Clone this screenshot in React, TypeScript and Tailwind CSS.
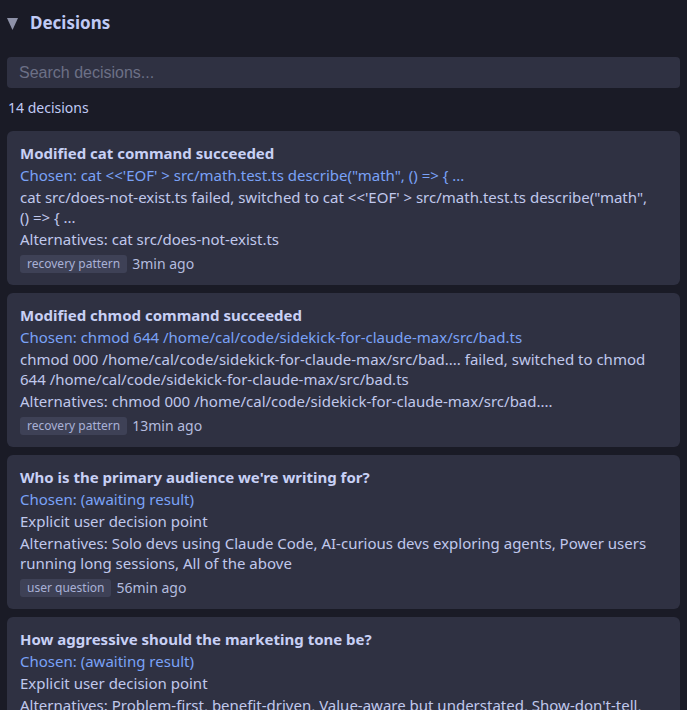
import { useState } from 'react'

type Decision = {
  id: number
  title: string
  chosen: string
  reason: string
  alternatives: string
  tag: string
  ago: string
}

const decisions: Decision[] = [
  {
    id: 1,
    title: 'Modified cat command succeeded',
    chosen: 'cat <<\'EOF\' > src/math.test.ts describe("math", () => { ...',
    reason: 'cat src/does-not-exist.ts failed, switched to cat <<\'EOF\' > src/math.test.ts describe("math", () => { ...',
    alternatives: 'cat src/does-not-exist.ts',
    tag: 'recovery pattern',
    ago: '3min ago',
  },
  {
    id: 2,
    title: 'Modified chmod command succeeded',
    chosen: 'chmod 644 /home/cal/code/sidekick-for-claude-max/src/bad.ts',
    reason: 'chmod 000 /home/cal/code/sidekick-for-claude-max/src/bad.... failed, switched to chmod 644 /home/cal/code/sidekick-for-claude-max/src/bad.ts',
    alternatives: 'chmod 000 /home/cal/code/sidekick-for-claude-max/src/bad....',
    tag: 'recovery pattern',
    ago: '13min ago',
  },
  {
    id: 3,
    title: "Who is the primary audience we're writing for?",
    chosen: '(awaiting result)',
    reason: 'Explicit user decision point',
    alternatives: 'Solo devs using Claude Code, AI-curious devs exploring agents, Power users running long sessions, All of the above',
    tag: 'user question',
    ago: '56min ago',
  },
  {
    id: 4,
    title: 'How aggressive should the marketing tone be?',
    chosen: '(awaiting result)',
    reason: 'Explicit user decision point',
    alternatives: "Problem-first, benefit-driven, Value-aware but understated, Show-don't-tell, Bold and opinionated",
    tag: 'user question',
    ago: '58min ago',
  },
  {
    id: 5,
    title: 'Which install method should the README lead with?',
    chosen: '(awaiting result)',
    reason: 'Explicit user decision point',
    alternatives: 'npm global install, npx one-liner, Clone and build',
    tag: 'user question',
    ago: '1h ago',
  },
]

function DecisionCard({ d }: { d: Decision }) {
  return (
    <div className="bg-[#2f3142] rounded-[6px] pl-[13px] pr-[25px] pt-3 pb-[11px] flex flex-col gap-[2px] text-[15px] leading-[20px]">
      <div className="font-bold text-[#c8d0f5]">{d.title}</div>
      <div className="text-[#7aa2f7]">Chosen: {d.chosen}</div>
      <div className="text-[#c0c8ec]">{d.reason}</div>
      <div className="text-[#c0c8ec]">Alternatives: {d.alternatives}</div>
      <div className="flex items-center gap-[5px] mt-[3px] h-5">
        <span className="bg-[#3e4156] text-[#a9b1d6] text-[12px] leading-[18px] px-[7px] rounded-[3px]">{d.tag}</span>
        <span className="text-[#b4bcdf] text-[14px]">{d.ago}</span>
      </div>
    </div>
  )
}

export default function App() {
  const [busca, setBusca] = useState('')
  const [open, setOpen] = useState(true)

  const lista = decisions.filter(d => d.title.toLowerCase().includes(busca.toLowerCase()))

  return (
    <div className="min-h-screen bg-[#1a1b26] px-[7px] font-['Noto_Sans',sans-serif]">
      <button onClick={() => setOpen(o => !o)} className="h-[44px] pt-[2px] flex items-center gap-3 text-[#c0caf5]">
        <svg width="11" height="12" viewBox="0 0 11 12" className="mt-[1px]">
          <polygon points="0,0 11,0 5.5,12" fill="#8e92a8" />
        </svg>
        <span className="text-[17px] font-bold">Decisions</span>
      </button>

      {open && (
        <>
          <input
            value={busca}
            onChange={e => setBusca(e.target.value)}
            placeholder="Search decisions..."
            className="mt-[13px] w-full h-[31px] bg-[#2f3142] rounded-[4px] px-3 text-[16px] font-['Liberation_Sans',sans-serif] text-[#c0caf5] placeholder:text-[#6c7086] outline-none"
          />
          <div className="mt-[10px] text-[14px] leading-[20px] text-[#c0caf5] pl-[1px]">14 decisions</div>
          <div className="mt-[13px] flex flex-col gap-2 pb-4">
            {lista.map(d => <DecisionCard key={d.id} d={d} />)}
          </div>
        </>
      )}
    </div>
  )
}
